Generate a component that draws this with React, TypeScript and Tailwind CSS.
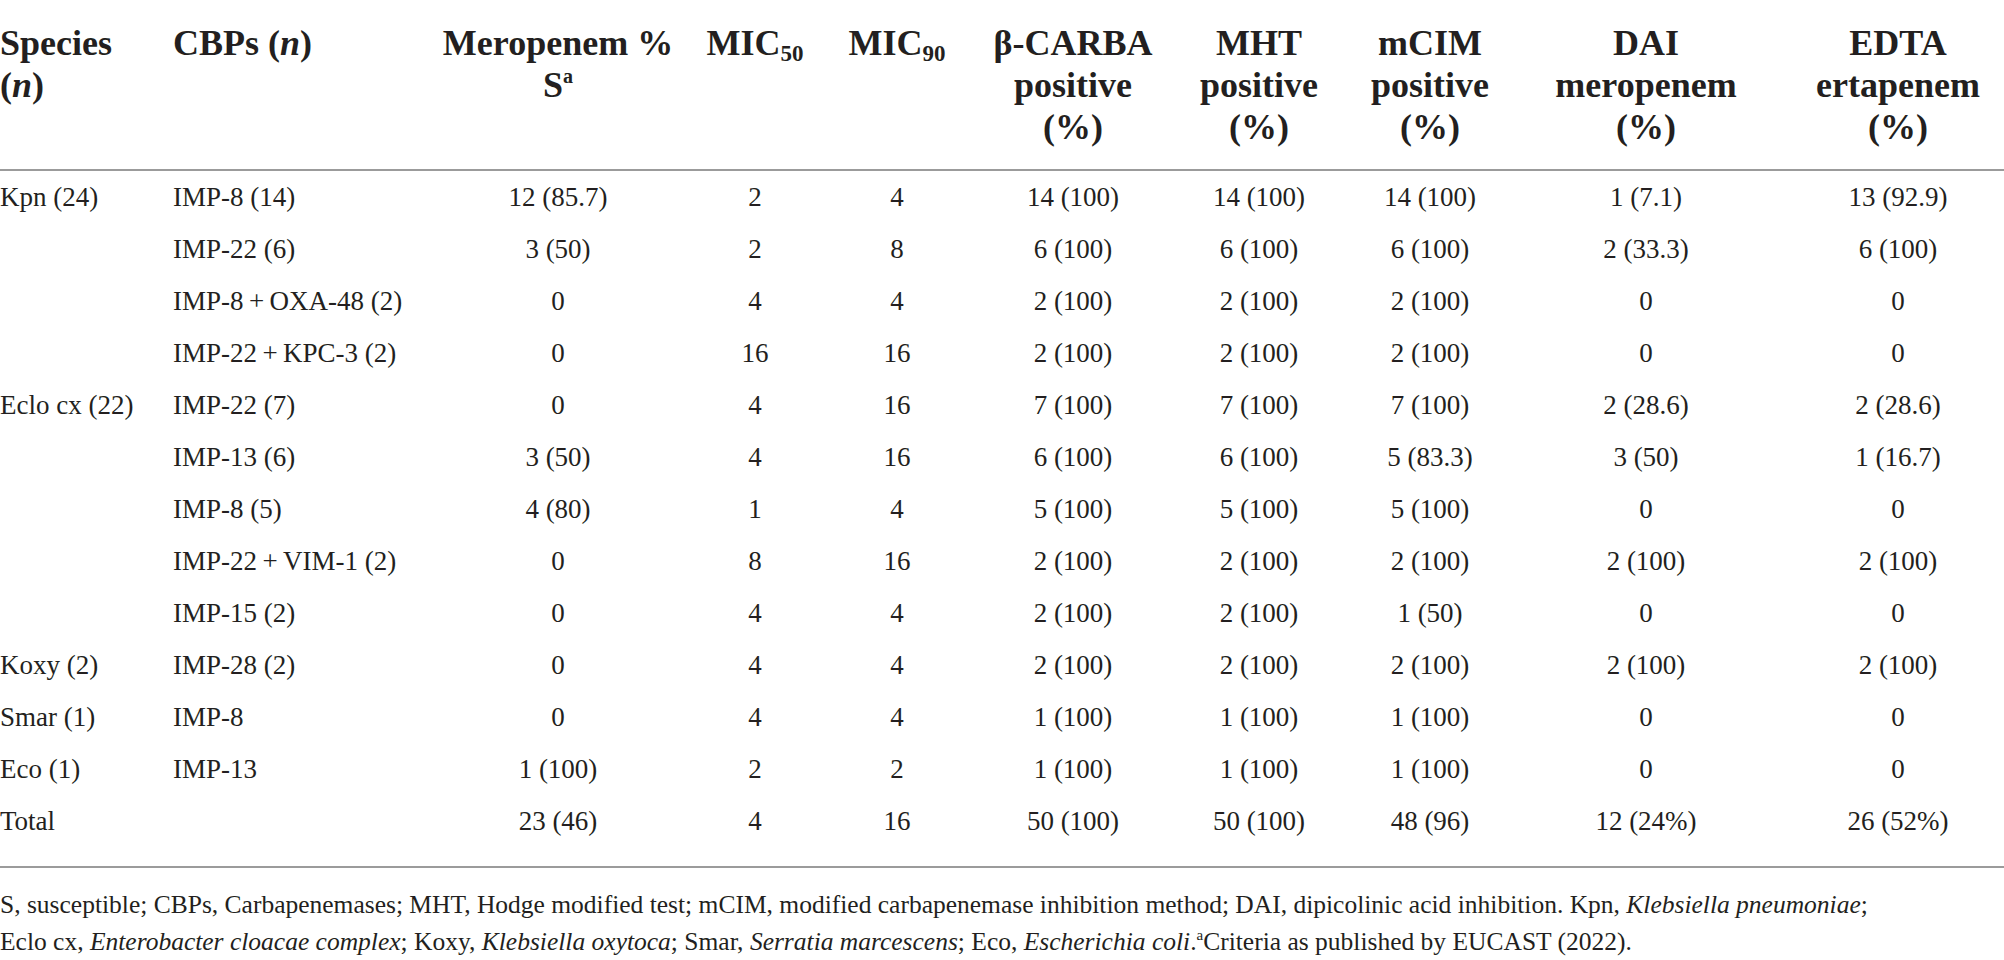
import React from "react";

const rows: string[][] = [
  ["Kpn (24)", "IMP-8 (14)", "12 (85.7)", "2", "4", "14 (100)", "14 (100)", "14 (100)", "1 (7.1)", "13 (92.9)"],
  ["", "IMP-22 (6)", "3 (50)", "2", "8", "6 (100)", "6 (100)", "6 (100)", "2 (33.3)", "6 (100)"],
  ["", "IMP-8\u2009+\u2009OXA-48 (2)", "0", "4", "4", "2 (100)", "2 (100)", "2 (100)", "0", "0"],
  ["", "IMP-22\u2009+\u2009KPC-3 (2)", "0", "16", "16", "2 (100)", "2 (100)", "2 (100)", "0", "0"],
  ["Eclo cx (22)", "IMP-22 (7)", "0", "4", "16", "7 (100)", "7 (100)", "7 (100)", "2 (28.6)", "2 (28.6)"],
  ["", "IMP-13 (6)", "3 (50)", "4", "16", "6 (100)", "6 (100)", "5 (83.3)", "3 (50)", "1 (16.7)"],
  ["", "IMP-8 (5)", "4 (80)", "1", "4", "5 (100)", "5 (100)", "5 (100)", "0", "0"],
  ["", "IMP-22\u2009+\u2009VIM-1 (2)", "0", "8", "16", "2 (100)", "2 (100)", "2 (100)", "2 (100)", "2 (100)"],
  ["", "IMP-15 (2)", "0", "4", "4", "2 (100)", "2 (100)", "1 (50)", "0", "0"],
  ["Koxy (2)", "IMP-28 (2)", "0", "4", "4", "2 (100)", "2 (100)", "2 (100)", "2 (100)", "2 (100)"],
  ["Smar (1)", "IMP-8", "0", "4", "4", "1 (100)", "1 (100)", "1 (100)", "0", "0"],
  ["Eco (1)", "IMP-13", "1 (100)", "2", "2", "1 (100)", "1 (100)", "1 (100)", "0", "0"],
  ["Total", "", "23 (46)", "4", "16", "50 (100)", "50 (100)", "48 (96)", "12 (24%)", "26 (52%)"],
];

const cellClass = [
  "text-left",
  "text-left",
  "text-center",
  "text-center",
  "text-center",
  "text-center",
  "text-center",
  "text-center",
  "text-center",
  "text-center pl-[28px]",
];

const gridCols =
  "grid grid-cols-[173px_267px_236px_158px_126px_226px_146px_196px_236px_240px]";

function Sub({ children }: { children: React.ReactNode }) {
  return <span className="text-[23px] relative top-[6px] font-bold">{children}</span>;
}

export default function App() {
  return (
    <div
      className="w-[2004px] h-[960px] bg-white text-[#231f20] overflow-hidden"
      style={{ fontFamily: '"Liberation Serif", "Times New Roman", serif' }}
    >
      {/* Header */}
      <div className={`${gridCols} h-[171px] pt-[22px] border-b-2 border-[#9b9b9b] font-bold text-[36px] leading-[42px] whitespace-nowrap`}>
        <div className="text-left">
          Species
          <br />
          (<i>n</i>)
        </div>
        <div className="text-left">
          CBPs (<i>n</i>)
        </div>
        <div className="text-center">
          Meropenem %
          <br />
          S<span className="text-[20px] relative -top-[14px] font-bold">a</span>
        </div>
        <div className="text-center">
          MIC<Sub>50</Sub>
        </div>
        <div className="text-center">
          MIC<Sub>90</Sub>
        </div>
        <div className="text-center">
          β-CARBA
          <br />
          positive
          <br />
          (%)
        </div>
        <div className="text-center">
          MHT
          <br />
          positive
          <br />
          (%)
        </div>
        <div className="text-center">
          mCIM
          <br />
          positive
          <br />
          (%)
        </div>
        <div className="text-center">
          DAI
          <br />
          meropenem
          <br />
          (%)
        </div>
        <div className="text-center pl-[28px]">
          EDTA
          <br />
          ertapenem
          <br />
          (%)
        </div>
      </div>

      {/* Body */}
      <div className="border-b-2 border-[#9b9b9b] pb-[19px] text-[27px] leading-[52px]">
        {rows.map((r, i) => (
          <div key={i} className={`${gridCols} h-[52px]`}>
            {r.map((c, j) => (
              <div key={j} className={`${cellClass[j]} whitespace-nowrap`}>
                {c}
              </div>
            ))}
          </div>
        ))}
      </div>

      {/* Footnote */}
      <div className="pt-[18px] text-[25.5px] leading-[37px] whitespace-nowrap">
        <div>
          S, susceptible; CBPs, Carbapenemases; MHT, Hodge modified test; mCIM, modified carbapenemase inhibition
          method; DAI, dipicolinic acid inhibition. Kpn, <i>Klebsiella pneumoniae</i>;
        </div>
        <div>
          Eclo cx, <i>Enterobacter cloacae complex</i>; Koxy, <i>Klebsiella oxytoca</i>; Smar,{" "}
          <i>Serratia marcescens</i>; Eco, <i>Escherichia coli</i>.
          <span className="text-[15px] relative -top-[10px]">a</span>Criteria as published by EUCAST (2022).
        </div>
      </div>
    </div>
  );
}
